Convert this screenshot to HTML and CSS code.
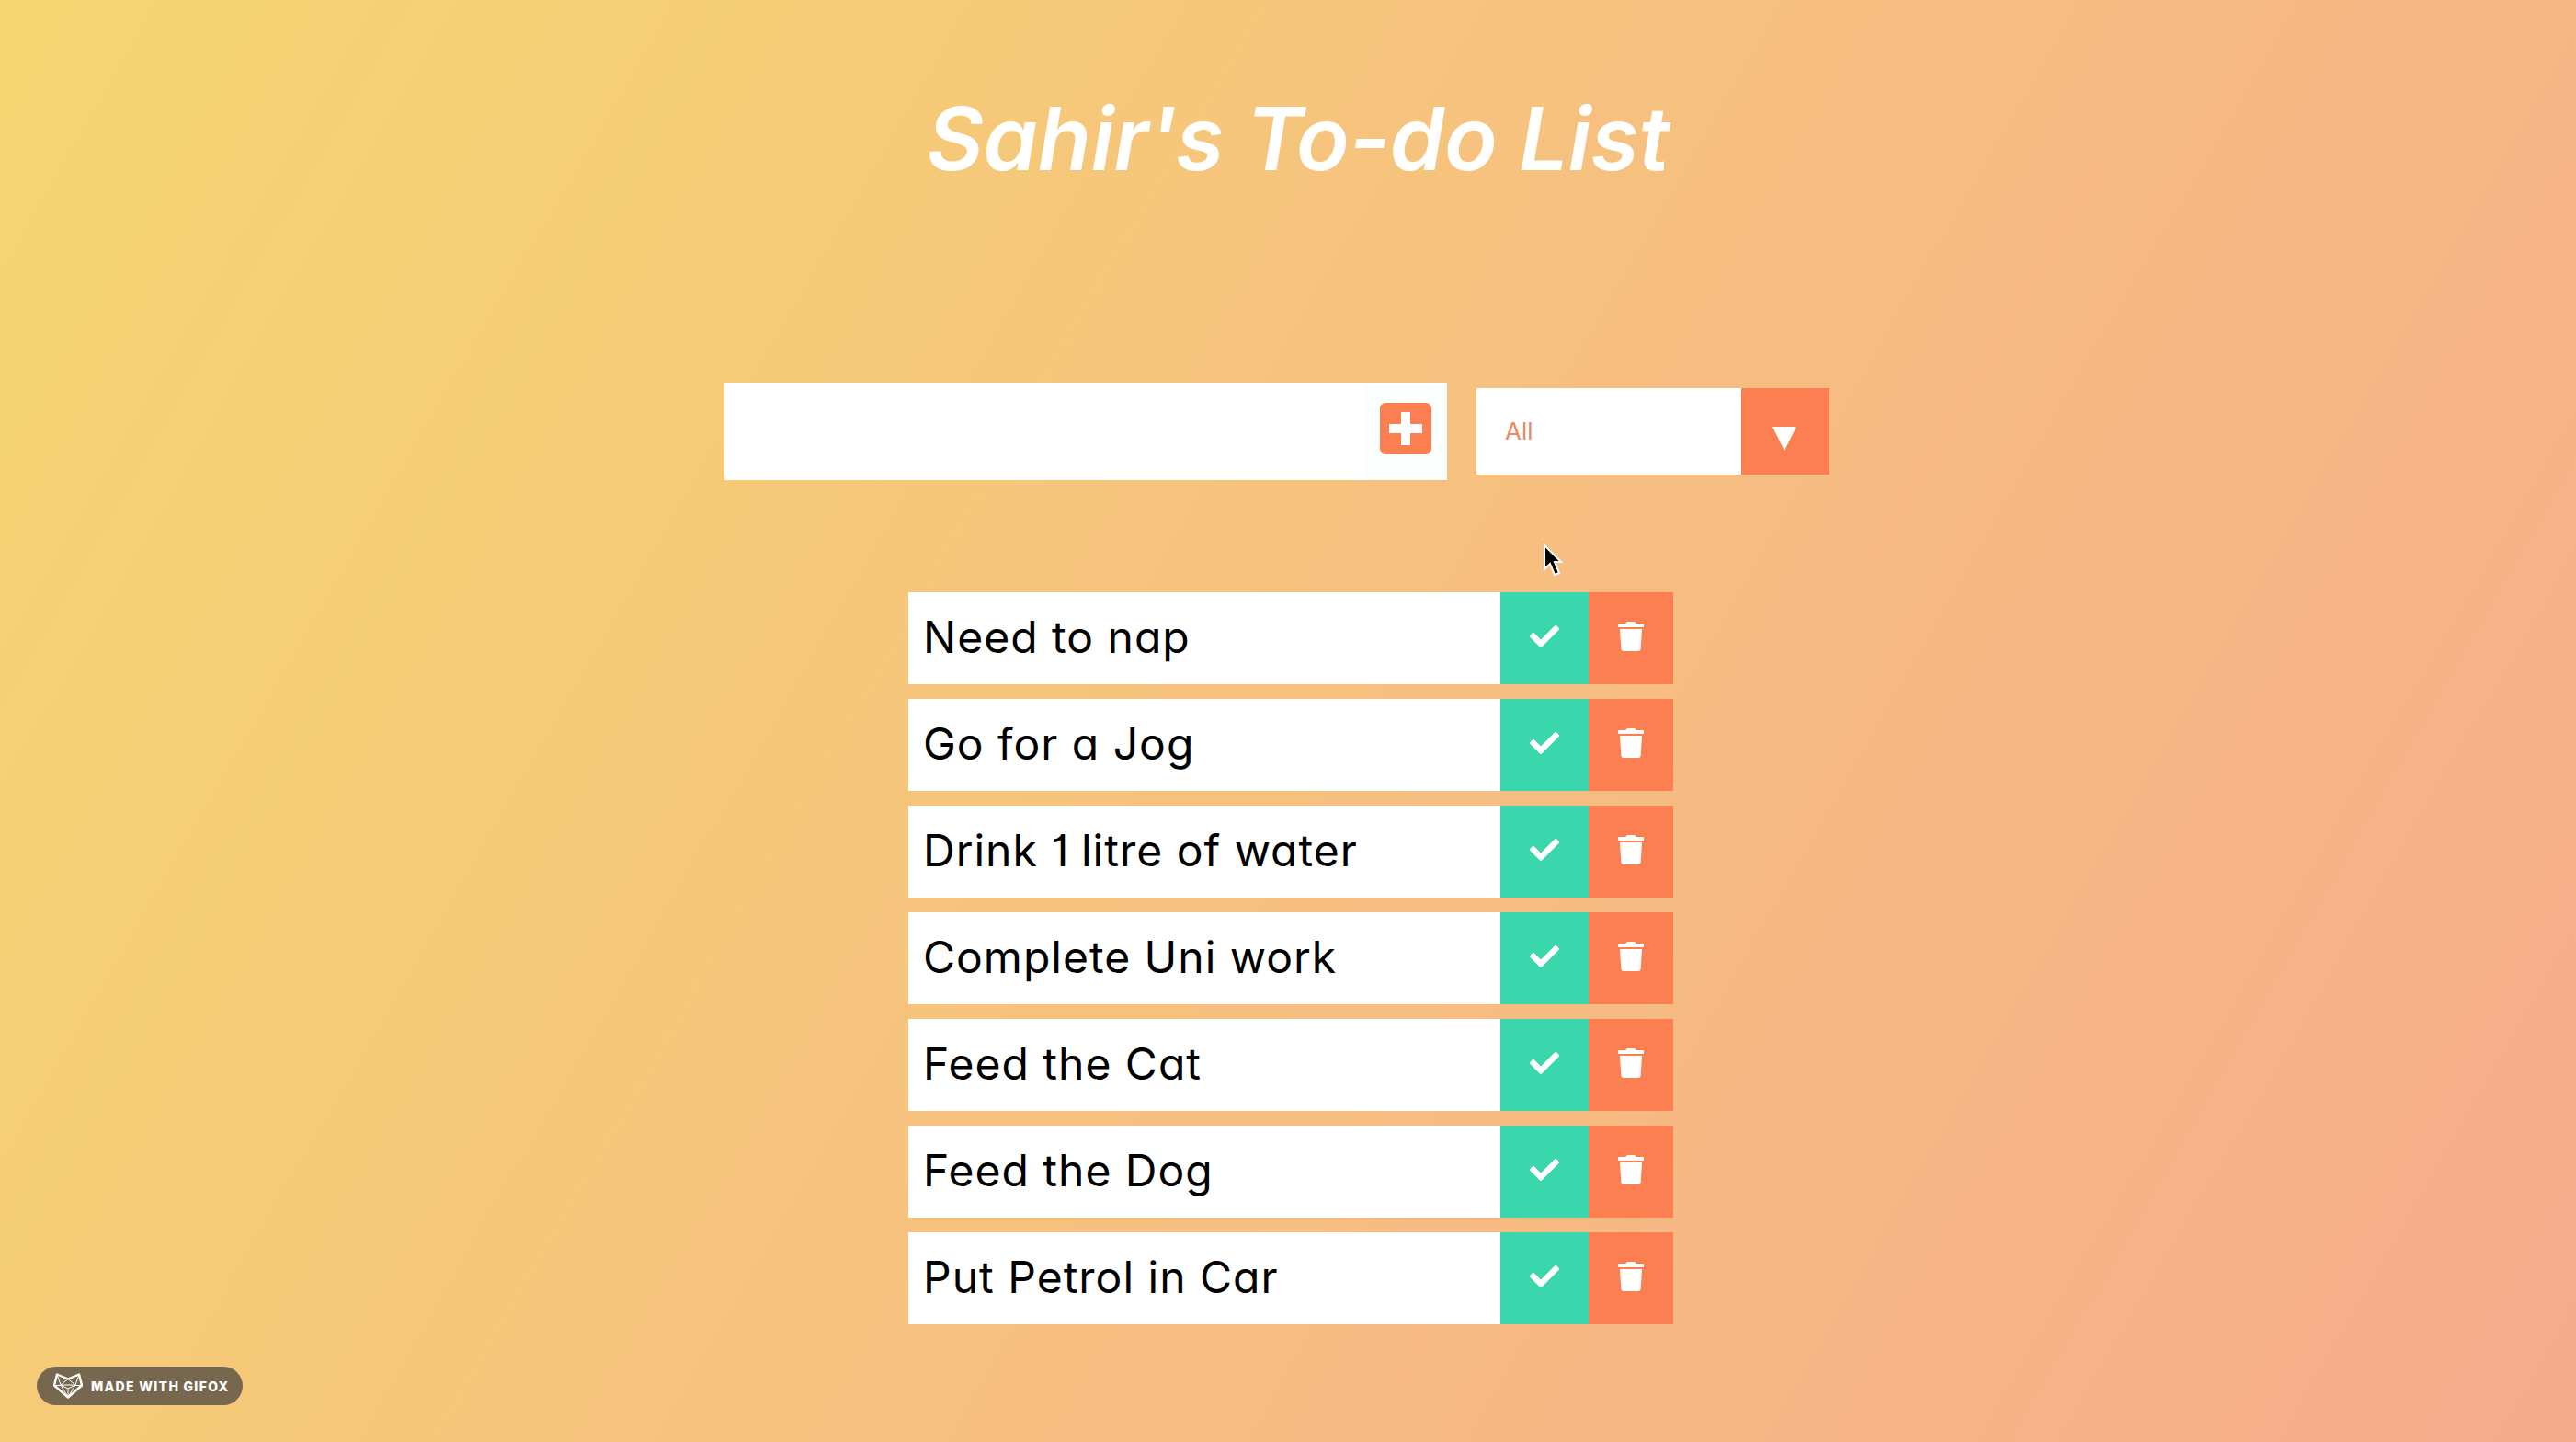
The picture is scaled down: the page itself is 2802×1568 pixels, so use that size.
FILE: index.html
```html
<!DOCTYPE html>
<html lang="en">

<head>
    <meta charset="utf-8">
    <title>Sahir's To-do List</title>
    <link rel="stylesheet" href="styles.css">
</head>

<body>
    <header>
        <h1>Sahir's To-do List</h1>
    </header>

    <main>
        <form class="toolbar">
            <div class="new-todo">
                <input type="text" class="new-todo-input" aria-label="New todo">
                <button type="button" class="add-wrap" aria-label="Add">
                    <span class="add-button">
                        <svg viewBox="0 0 36 36" width="36" height="36"><path d="M13 0h10v13h13v10H23v13H13V23H0V13h13z" /></svg>
                    </span>
                </button>
            </div>
            <div class="filter">
                <select class="filter-select" aria-label="Filter">
                    <option>All</option>
                    <option>Completed</option>
                    <option>Uncompleted</option>
                </select>
                <span class="filter-arrow">
                    <svg viewBox="0 0 26 26" width="26" height="26"><polygon points="0,0 26,0 13,26" /></svg>
                </span>
            </div>
        </form>

        <ul class="todo-list">
            <li class="todo">
                <span class="todo-text">Need to nap</span>
                <button class="check-btn" aria-label="Done"><svg class="check-icon" viewBox="0 0 512 512"><path d="M173.898 439.404l-166.4-166.4c-9.997-9.997-9.997-26.206 0-36.204l36.203-36.204c9.997-9.998 26.207-9.998 36.204 0L192 312.69 432.095 72.596c9.997-9.997 26.207-9.997 36.204 0l36.203 36.204c9.997 9.997 9.997 26.206 0 36.204l-294.4 294.401c-9.998 9.997-26.207 9.997-36.204-.001z" /></svg></button>
                <button class="trash-btn" aria-label="Delete"><svg class="trash-icon" viewBox="0 0 448 512"><path d="M432 32H312l-9.4-18.7A24 24 0 0 0 281.1 0H166.8a23.72 23.72 0 0 0-21.4 13.3L136 32H16A16 16 0 0 0 0 48v32a16 16 0 0 0 16 16h416a16 16 0 0 0 16-16V48a16 16 0 0 0-16-16zM53.2 467a48 48 0 0 0 47.9 45h245.8a48 48 0 0 0 47.9-45L416 128H32z" /></svg></button>
            </li>
            <li class="todo">
                <span class="todo-text">Go for a Jog</span>
                <button class="check-btn" aria-label="Done"><svg class="check-icon" viewBox="0 0 512 512"><path d="M173.898 439.404l-166.4-166.4c-9.997-9.997-9.997-26.206 0-36.204l36.203-36.204c9.997-9.998 26.207-9.998 36.204 0L192 312.69 432.095 72.596c9.997-9.997 26.207-9.997 36.204 0l36.203 36.204c9.997 9.997 9.997 26.206 0 36.204l-294.4 294.401c-9.998 9.997-26.207 9.997-36.204-.001z" /></svg></button>
                <button class="trash-btn" aria-label="Delete"><svg class="trash-icon" viewBox="0 0 448 512"><path d="M432 32H312l-9.4-18.7A24 24 0 0 0 281.1 0H166.8a23.72 23.72 0 0 0-21.4 13.3L136 32H16A16 16 0 0 0 0 48v32a16 16 0 0 0 16 16h416a16 16 0 0 0 16-16V48a16 16 0 0 0-16-16zM53.2 467a48 48 0 0 0 47.9 45h245.8a48 48 0 0 0 47.9-45L416 128H32z" /></svg></button>
            </li>
            <li class="todo">
                <span class="todo-text">Drink <span class="narrow-digit">1</span> litre of water</span>
                <button class="check-btn" aria-label="Done"><svg class="check-icon" viewBox="0 0 512 512"><path d="M173.898 439.404l-166.4-166.4c-9.997-9.997-9.997-26.206 0-36.204l36.203-36.204c9.997-9.998 26.207-9.998 36.204 0L192 312.69 432.095 72.596c9.997-9.997 26.207-9.997 36.204 0l36.203 36.204c9.997 9.997 9.997 26.206 0 36.204l-294.4 294.401c-9.998 9.997-26.207 9.997-36.204-.001z" /></svg></button>
                <button class="trash-btn" aria-label="Delete"><svg class="trash-icon" viewBox="0 0 448 512"><path d="M432 32H312l-9.4-18.7A24 24 0 0 0 281.1 0H166.8a23.72 23.72 0 0 0-21.4 13.3L136 32H16A16 16 0 0 0 0 48v32a16 16 0 0 0 16 16h416a16 16 0 0 0 16-16V48a16 16 0 0 0-16-16zM53.2 467a48 48 0 0 0 47.9 45h245.8a48 48 0 0 0 47.9-45L416 128H32z" /></svg></button>
            </li>
            <li class="todo">
                <span class="todo-text">Complete Uni work</span>
                <button class="check-btn" aria-label="Done"><svg class="check-icon" viewBox="0 0 512 512"><path d="M173.898 439.404l-166.4-166.4c-9.997-9.997-9.997-26.206 0-36.204l36.203-36.204c9.997-9.998 26.207-9.998 36.204 0L192 312.69 432.095 72.596c9.997-9.997 26.207-9.997 36.204 0l36.203 36.204c9.997 9.997 9.997 26.206 0 36.204l-294.4 294.401c-9.998 9.997-26.207 9.997-36.204-.001z" /></svg></button>
                <button class="trash-btn" aria-label="Delete"><svg class="trash-icon" viewBox="0 0 448 512"><path d="M432 32H312l-9.4-18.7A24 24 0 0 0 281.1 0H166.8a23.72 23.72 0 0 0-21.4 13.3L136 32H16A16 16 0 0 0 0 48v32a16 16 0 0 0 16 16h416a16 16 0 0 0 16-16V48a16 16 0 0 0-16-16zM53.2 467a48 48 0 0 0 47.9 45h245.8a48 48 0 0 0 47.9-45L416 128H32z" /></svg></button>
            </li>
            <li class="todo">
                <span class="todo-text">Feed the Cat</span>
                <button class="check-btn" aria-label="Done"><svg class="check-icon" viewBox="0 0 512 512"><path d="M173.898 439.404l-166.4-166.4c-9.997-9.997-9.997-26.206 0-36.204l36.203-36.204c9.997-9.998 26.207-9.998 36.204 0L192 312.69 432.095 72.596c9.997-9.997 26.207-9.997 36.204 0l36.203 36.204c9.997 9.997 9.997 26.206 0 36.204l-294.4 294.401c-9.998 9.997-26.207 9.997-36.204-.001z" /></svg></button>
                <button class="trash-btn" aria-label="Delete"><svg class="trash-icon" viewBox="0 0 448 512"><path d="M432 32H312l-9.4-18.7A24 24 0 0 0 281.1 0H166.8a23.72 23.72 0 0 0-21.4 13.3L136 32H16A16 16 0 0 0 0 48v32a16 16 0 0 0 16 16h416a16 16 0 0 0 16-16V48a16 16 0 0 0-16-16zM53.2 467a48 48 0 0 0 47.9 45h245.8a48 48 0 0 0 47.9-45L416 128H32z" /></svg></button>
            </li>
            <li class="todo">
                <span class="todo-text">Feed the Dog</span>
                <button class="check-btn" aria-label="Done"><svg class="check-icon" viewBox="0 0 512 512"><path d="M173.898 439.404l-166.4-166.4c-9.997-9.997-9.997-26.206 0-36.204l36.203-36.204c9.997-9.998 26.207-9.998 36.204 0L192 312.69 432.095 72.596c9.997-9.997 26.207-9.997 36.204 0l36.203 36.204c9.997 9.997 9.997 26.206 0 36.204l-294.4 294.401c-9.998 9.997-26.207 9.997-36.204-.001z" /></svg></button>
                <button class="trash-btn" aria-label="Delete"><svg class="trash-icon" viewBox="0 0 448 512"><path d="M432 32H312l-9.4-18.7A24 24 0 0 0 281.1 0H166.8a23.72 23.72 0 0 0-21.4 13.3L136 32H16A16 16 0 0 0 0 48v32a16 16 0 0 0 16 16h416a16 16 0 0 0 16-16V48a16 16 0 0 0-16-16zM53.2 467a48 48 0 0 0 47.9 45h245.8a48 48 0 0 0 47.9-45L416 128H32z" /></svg></button>
            </li>
            <li class="todo">
                <span class="todo-text">Put Petrol in Car</span>
                <button class="check-btn" aria-label="Done"><svg class="check-icon" viewBox="0 0 512 512"><path d="M173.898 439.404l-166.4-166.4c-9.997-9.997-9.997-26.206 0-36.204l36.203-36.204c9.997-9.998 26.207-9.998 36.204 0L192 312.69 432.095 72.596c9.997-9.997 26.207-9.997 36.204 0l36.203 36.204c9.997 9.997 9.997 26.206 0 36.204l-294.4 294.401c-9.998 9.997-26.207 9.997-36.204-.001z" /></svg></button>
                <button class="trash-btn" aria-label="Delete"><svg class="trash-icon" viewBox="0 0 448 512"><path d="M432 32H312l-9.4-18.7A24 24 0 0 0 281.1 0H166.8a23.72 23.72 0 0 0-21.4 13.3L136 32H16A16 16 0 0 0 0 48v32a16 16 0 0 0 16 16h416a16 16 0 0 0 16-16V48a16 16 0 0 0-16-16zM53.2 467a48 48 0 0 0 47.9 45h245.8a48 48 0 0 0 47.9-45L416 128H32z" /></svg></button>
            </li>
        </ul>
    </main>

    <svg class="cursor" viewBox="0 0 24 38" width="24" height="38"><polygon points="2,2 2,28 8,22 13,34 18,32 13,20 20,20" /></svg>

    <div class="gifox-badge">
        <svg class="gifox-icon" viewBox="0 0 32 28" width="32" height="28">
            <path class="fox-inner" d="M8 13l8-6.500 8 6.500-8 13zM4 1.500l4 11.500h16l4-11.500M1 13.500h7M24 13.500h7M8 13l8 4 8-4M16 17v9" />
            <path class="fox-outer" d="M4 1.500l12 5 12-5 3 12-15 13-15-13z" />
        </svg>
        <span>MADE WITH GIFOX</span>
    </div>
</body>

</html>
```
FILE: styles.css
```css
:root {
    --accent-color: #fb7f50;
    --done-color: #39d7ab;
    --ui-font: Inter, 'Noto Sans', sans-serif;
}

* {
    margin: 0;
    padding: 0;
    box-sizing: border-box;
}

html,
body {
    height: 100%;
}

body {
    position: relative;
    overflow: hidden;
    font-family: var(--ui-font);
    font-feature-settings: 'cv11' 1;
    background: linear-gradient(120deg, #f6d671, #f6ab8c);
}

header {
    height: 416px;
    padding: 86px 0 0 22px;
    text-align: center;
}

h1 {
    font-size: 95px;
    font-weight: 600;
    font-style: italic;
    letter-spacing: -0.2px;
    line-height: 130px;
    color: #fff;
}

.toolbar {
    display: flex;
    align-items: center;
    justify-content: center;
    gap: 32px;
    padding-right: 24px;
}

.new-todo {
    display: flex;
    width: 786px;
    height: 106px;
    background: #fff;
}

.new-todo-input {
    flex: 1;
    min-width: 0;
    border: none;
    outline: none;
    background: #fff;
}

.add-wrap {
    display: flex;
    align-items: center;
    justify-content: center;
    width: 88px;
    padding: 0 17px 6px 15px;
    border: none;
    background: #fafffe;
}

.add-button {
    display: flex;
    align-items: center;
    justify-content: center;
    width: 56px;
    height: 56px;
    border-radius: 6px;
    background: var(--accent-color);
}

.add-button svg,
.filter-arrow svg {
    fill: #fff;
}

.filter {
    display: flex;
    width: 384px;
    height: 94px;
}

.filter-select {
    flex: 1;
    min-width: 0;
    padding: 0 0 2px 31px;
    border: none;
    outline: none;
    border-radius: 0;
    appearance: none;
    font-family: var(--ui-font);
    font-size: 26px;
    font-weight: 400;
    color: #ee8860;
    background: #fff;
}

.filter-arrow {
    display: flex;
    align-items: center;
    justify-content: center;
    width: 96px;
    padding-top: 16px;
    padding-right: 2px;
    background: var(--accent-color);
}

.todo-list {
    display: flex;
    flex-direction: column;
    gap: 16px;
    width: 832px;
    margin: 122px auto 0;
    transform: translateX(3px);
    list-style: none;
}

.todo {
    display: flex;
    height: 100px;
    background: #fff;
}

.todo-text {
    flex: 1;
    padding-left: 16px;
    font-size: 48px;
    letter-spacing: 1px;
    line-height: 98px;
    color: #000;
}

.narrow-digit {
    font-feature-settings: 'cv01' 1, 'cv11' 1;
    letter-spacing: -1px;
}

.check-btn,
.trash-btn {
    display: flex;
    align-items: center;
    justify-content: center;
    padding-bottom: 4px;
    border: none;
    color: #fff;
}

.check-btn {
    width: 96px;
    background: var(--done-color);
}

.trash-btn {
    width: 92px;
    background: var(--accent-color);
}

.check-icon {
    width: 32px;
    height: 32px;
    fill: #fff;
}

.trash-icon {
    width: 28px;
    height: 32px;
    fill: #fff;
}

.cursor {
    position: absolute;
    top: 591px;
    left: 1678px;
    fill: #000;
    stroke: #fff;
    stroke-width: 2;
}

.gifox-badge {
    position: absolute;
    bottom: 40px;
    left: 40px;
    display: flex;
    align-items: center;
    gap: 9px;
    width: 224px;
    height: 42px;
    padding-left: 18px;
    border-radius: 21px;
    font-family: var(--ui-font);
    font-size: 14px;
    font-weight: 800;
    letter-spacing: 1.3px;
    white-space: nowrap;
    color: #fff;
    background: #78674f;
}

.gifox-icon {
    flex-shrink: 0;
    fill: none;
    stroke: #fff;
    stroke-linejoin: round;
}

.fox-inner {
    stroke-width: 1;
}

.fox-outer {
    stroke-width: 2.4;
}
```
